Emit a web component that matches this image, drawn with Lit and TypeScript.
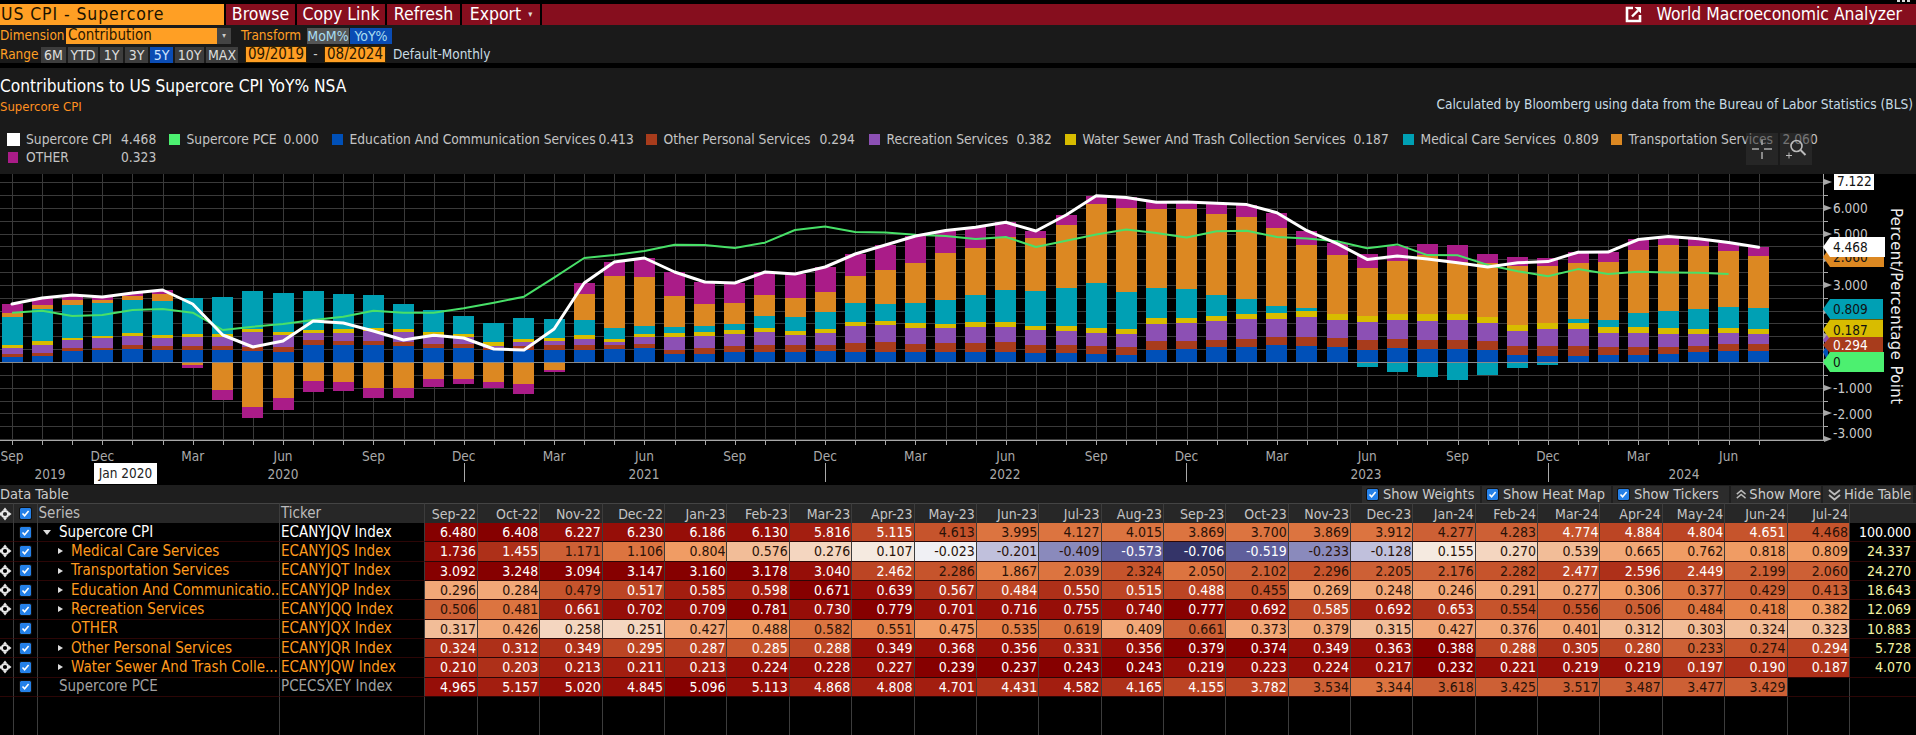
import { LitElement, html, css, svg } from "lit";
import { customElement } from "lit/decorators.js";

const MONTHS = ["Sep-22","Oct-22","Nov-22","Dec-22","Jan-23","Feb-23","Mar-23","Apr-23","May-23","Jun-23","Jul-23","Aug-23","Sep-23","Oct-23","Nov-23","Dec-23","Jan-24","Feb-24","Mar-24","Apr-24","May-24","Jun-24","Jul-24"];

interface Row { name: string; ticker: string; kind: "main"|"sub"|"plain"|"dim"; arrow: ""|"down"|"right"; move: boolean; weight: string; vals: string; heat: string; }

const ROWS: Row[] = [
 { name:"Supercore CPI", ticker:"ECANYJQV Index", kind:"main", arrow:"down", move:false, weight:"100.000", heat:"aabbbbceFHHHHHHHGGfeefF",
   vals:"6.480 6.408 6.227 6.230 6.186 6.130 5.816 5.115 4.613 3.995 4.127 4.015 3.869 3.700 3.869 3.912 4.277 4.283 4.774 4.884 4.804 4.651 4.468" },
 { name:"Medical Care Services", ticker:"ECANYJQS Index", kind:"sub", arrow:"right", move:true, weight:"24.337", heat:"bdGHJLMNOPQrsrQPNMLKJJJ",
   vals:"1.736 1.455 1.171 1.106 0.804 0.576 0.276 0.107 -0.023 -0.201 -0.409 -0.573 -0.706 -0.519 -0.233 -0.128 0.155 0.270 0.539 0.665 0.762 0.818 0.809" },
 { name:"Transportation Services", ticker:"ECANYJQT Index", kind:"sub", arrow:"right", move:true, weight:"24.270", heat:"aaaaaabeFIHFHGFGGFedeGG",
   vals:"3.092 3.248 3.094 3.147 3.160 3.178 3.040 2.462 2.286 1.867 2.039 2.324 2.050 2.102 2.296 2.205 2.176 2.282 2.477 2.596 2.449 2.199 2.060" },
 { name:"Education And Communicatio...", ticker:"ECANYJQP Index", kind:"sub", arrow:"right", move:true, weight:"18.643", heat:"KKFeccabdedeeFKKKKKJHGG",
   vals:"0.296 0.284 0.479 0.517 0.585 0.598 0.671 0.639 0.567 0.484 0.550 0.515 0.488 0.455 0.269 0.248 0.246 0.291 0.277 0.306 0.377 0.429 0.413" },
 { name:"Recreation Services", ticker:"ECANYJQQ Index", kind:"sub", arrow:"right", move:true, weight:"12.069", heat:"GHcbbababbbbabecdFFGHIJ",
   vals:"0.506 0.481 0.661 0.702 0.709 0.781 0.730 0.779 0.701 0.716 0.755 0.740 0.777 0.692 0.585 0.692 0.653 0.554 0.556 0.506 0.484 0.418 0.382" },
 { name:"OTHER", ticker:"ECANYJQX Index", kind:"sub", arrow:"", move:false, weight:"10.883", heat:"LKMMKJHIJIHKGKKLKKKLLLL",
   vals:"0.317 0.426 0.258 0.251 0.427 0.488 0.582 0.551 0.475 0.535 0.619 0.409 0.661 0.373 0.379 0.315 0.427 0.376 0.401 0.312 0.303 0.324 0.323" },
 { name:"Other Personal Services", ticker:"ECANYJQR Index", kind:"sub", arrow:"right", move:true, weight:"5.728", heat:"dddeefebbbcbaabbaedeGFe",
   vals:"0.324 0.312 0.349 0.295 0.287 0.285 0.288 0.349 0.368 0.356 0.331 0.356 0.379 0.374 0.349 0.363 0.388 0.288 0.305 0.280 0.233 0.274 0.294" },
 { name:"Water Sewer And Trash Colle...", ticker:"ECANYJQW Index", kind:"sub", arrow:"right", move:true, weight:"4.070", heat:"cdcccbbbaaaabbbbabbbddd",
   vals:"0.210 0.203 0.213 0.211 0.213 0.224 0.228 0.227 0.239 0.237 0.243 0.243 0.219 0.223 0.224 0.217 0.232 0.221 0.219 0.219 0.197 0.190 0.187" },
 { name:"Supercore PCE", ticker:"PCECSXEY Index", kind:"dim", arrow:"", move:false, weight:"", heat:"bcbbabcccdcdeeGHGGGGGG",
   vals:"4.965 5.157 5.020 4.845 5.096 5.113 4.868 4.808 4.701 4.431 4.582 4.165 4.155 3.782 3.534 3.344 3.618 3.425 3.517 3.487 3.477 3.429" },
];

const HEAT: Record<string,string> = {
  a:"#860000", b:"#960e08", c:"#a31e10", d:"#ae3019", e:"#bc4524", f:"#c6542c", g:"#cd6035", h:"#dc7440",
  i:"#e5824a", j:"#f09c64", k:"#f2a878", l:"#f2bd98", m:"#f4d6c0", n:"#f5eae0", o:"#f0f0f4",
  p:"#c0c0dc", q:"#8a8abc", r:"#5f5f9c", s:"#343468",
};

// Segment tops measured on the reference: blue, brown, purple, yellow, teal, orange, magenta
// (negative pair where the orange/magenta lie below zero). Units: zoomed y, zero = 576, 77 = 1pt.
const EARLY: number[][] = [
 [561,552,534,525,441,429,402],[558,549,525,513,417,405,384],[543,534,510,504,405,390,375],[540,534,504,498,399,390,381],
 [537,525,498,489,390,378,369],[540,528,504,495,393,372,360],
 [540,528,501,492,384,585,594],[540,528,501,492,381,660,690],[543,531,486,477,363,711,744],[546,531,495,486,369,684,720],
 [525,510,489,480,363,633,666],[525,513,489,477,372,636,663],[525,513,483,474,375,654,684],[528,516,486,477,402,654,684],
 [534,522,495,486,420,627,652],[534,522,501,492,438,627,642],[540,534,528,516,459,636,654],[540,528,516,507,444,642,672],
 [540,525,513,504,447,600,606],
 [540,525,507,495,450,372,339],[537,525,516,507,474,318,276],[534,522,501,492,468,321,264],[552,540,501,489,471,378,306],
 [552,534,498,486,468,402,336],[546,528,492,480,462,399,339],[546,525,486,474,438,375,306],[546,525,495,483,441,384,312],
 [543,525,489,477,426,366,291],[546,519,468,456,399,318,252],[546,516,465,453,402,300,225],[546,522,474,459,399,279,198],
 [546,519,474,462,390,249,182],[546,519,471,456,375,234,172],[546,516,471,456,360,201,157],[549,525,480,468,363,204,183],
 [549,525,483,468,354,165,135],
];
const EARLY_GREEN = [428,422,438,435,420,417,428,480,470,462,450,440,422,428,428,415,398,380,323,264,255,243,224,225,234,218,180,170,186,188,194,198,207,201,231,212];

const COLORS = ["#0050b8","#a83c1c","#8c50b4","#d8bc00","#00a0b4","#dc8822","#aa1c88"];
const PX = 25.67, ZERO = 188; // zero line in chart coordinates (chart starts at page y 174)
const tickX = (i: number) => 12 + 30.116 * i;
const yOf = (v: number) => ZERO - v * PX;

interface Bar { comps: number[]; total: number; pce: number|null; }
const num = (r: number) => ROWS[r].vals.split(" ").map(Number);
const BARS: Bar[] = (() => {
  const out: Bar[] = [];
  EARLY.forEach((t, i) => {
    const negMode = t[5] > 576;
    const comps = [ (576-t[0]), (t[0]-t[1]), (t[1]-t[2]), (t[2]-t[3]), (t[3]-t[4]),
      negMode ? -(t[5]-576) : (t[4]-t[5]), negMode ? -(t[6]-t[5]) : (t[5]-t[6]) ].map(v => v/77);
    out.push({ comps, total: comps.reduce((a,b)=>a+b,0), pce: (576-EARLY_GREEN[i])/77 });
  });
  const med=num(1), tr=num(2), edu=num(3), rec=num(4), oth=num(5), per=num(6), wat=num(7), tot=num(0), pce=num(8);
  for (let i=0;i<23;i++) {
    out.push({ comps:[edu[i],per[i],rec[i],wat[i],med[i],tr[i],oth[i]], total: tot[i], pce: i<pce.length ? pce[i] : null });
  }
  return out;
})();

const LEGEND = [
 { w:162, c:"#fff", big:true, t:"Supercore CPI", v:"4.468", lw:95 },
 { w:163, c:"#4cf070", t:"Supercore PCE", v:"0.000", lw:97 },
 { w:314, c:"#0050b8", t:"Education And Communication Services", v:"0.413", lw:249 },
 { w:223, c:"#a83c1c", t:"Other Personal Services", v:"0.294", lw:156 },
 { w:196, c:"#8c50b4", t:"Recreation Services", v:"0.382", lw:130 },
 { w:338, c:"#d8bc00", t:"Water Sewer And Trash Collection Services", v:"0.187", lw:271 },
 { w:208, c:"#00a0b4", t:"Medical Care Services", v:"0.809", lw:143 },
 { w:240, c:"#dc8822", t:"Transportation Services", v:"2.060", lw:154 },
];

const RANGE = [["6M",25],["YTD",30],["1Y",23],["3Y",23],["5Y",23,1],["10Y",29],["MAX",32]] as [string,number,number?][];
const MONTH_LABEL = ["Sep","Dec","Mar","Jun"];
const YEARS: [string,number][] = [["2019",50],["2020",283],["2021",644],["2022",1005],["2023",1366],["2024",1684]];
const YEAR_SEP = [464,825,1186,1548];

@customElement("app-root")
export class AppRoot extends LitElement {
  static styles = css`
    :host { display:block; width:1916px; height:735px; background:#000; overflow:hidden; position:relative;
      font-family:"DejaVu Sans Condensed","DejaVu Sans",sans-serif; font-stretch:condensed; font-size:13.5px; color:#ddd; line-height:1; }
    .dots { position:absolute; right:6px; top:0; width:13px; height:2px;
      background:repeating-linear-gradient(90deg,#ddd 0 3px,#000 3px 5px); }
    .topbar { display:flex; height:21px; margin-top:4px; gap:2px; font-size:17.5px; color:#fff; }
    .title-field { width:224px; background:#ff9f24; color:#1a1200; display:flex; align-items:center; padding-left:1px; box-sizing:border-box; letter-spacing:.9px; white-space:nowrap; }
    .tb { background:#860e1e; display:flex; align-items:center; justify-content:center; white-space:nowrap; }
    .tb-fill { flex:1; background:#860e1e; display:flex; align-items:center; justify-content:flex-end; padding-right:14px; gap:14px; font-size:17.4px; }
    .caret { font-size:9px; margin-left:7px; color:#ddd; }
    .panel { background:#1a1a1a; height:38px; padding-top:2px; box-sizing:border-box; display:flex; flex-direction:column; gap:2px; color:#ff9f24; }
    .prow { display:flex; align-items:center; height:17px; white-space:nowrap; }
    .field { background:#ff9f24; color:#2a1800; height:16px; display:flex; align-items:center; box-sizing:border-box; padding-left:2px; font-size:15px; }
    .dd { width:14px; height:16px; background:#444; color:#ccc; font-size:8px; display:flex; align-items:center; justify-content:center; }
    .btn { height:16px; background:#3d3d3d; color:#ddd; display:flex; align-items:center; justify-content:center; font-size:14px; }
    .btn.on { background:#0a4cb4; color:#cfe4ff; }
    .btn.light { background:#555; color:#a8dcf0; }
    .btn.blue { background:#0a4cb4; color:#a8dcf0; }
    .range { display:flex; gap:2px; }
    .date { width:62px; height:17px; background:#ff9f24; color:#2a1800; display:flex; align-items:center; justify-content:center; font-size:15px;
      border:1px solid #332200; box-sizing:border-box; }
    .band { height:5px; background:#000; }
    .head { height:106px; background:#1a1a1a; position:relative; }
    .head-top { padding-top:10px; height:50px; box-sizing:border-box; }
    .h-title { font-size:17.2px; color:#fff; white-space:nowrap; }
    .h-sub-row { display:flex; justify-content:space-between; align-items:center; padding-right:3px; margin-top:4px; }
    .h-sub { color:#ff9020; font-size:13px; }
    .h-calc { color:#c8dce4; font-size:13.6px; position:relative; top:-1px; }
    .legend { display:flex; flex-wrap:wrap; padding:15px 0 0 7px; row-gap:5px; font-size:13.7px; }
    .li { display:flex; align-items:center; height:13px; color:#c4c4c4; white-space:nowrap; }
    .sw { width:11px; height:11px; margin-right:6.5px; flex:none; }
    .sw.big { width:13px; height:13px; margin-right:6px; }
    .sw.small { width:10px; height:11px; margin-left:1px; margin-right:8px; }
    .lname { flex:none; }
    .hud { position:absolute; left:1746px; top:65px; display:flex; gap:2px; }
    .hud div { width:32px; height:32px; background:rgba(50,50,50,.55); }
    .hud svg { display:block; }
    .chart { display:block; }
    .ax { font-size:13.5px; fill:#c8c8c8; font-family:"DejaVu Sans Condensed","DejaVu Sans",sans-serif; font-stretch:condensed; }
    .xl { font-size:13.5px; fill:#aaa; text-anchor:middle; font-family:"DejaVu Sans Condensed","DejaVu Sans",sans-serif; font-stretch:condensed; }
    .tagt { font-size:13.5px; fill:#111; font-family:"DejaVu Sans Condensed","DejaVu Sans",sans-serif; font-stretch:condensed; }
    .tagw { fill:#fff; }
    .axis-title { fill:#eee; font-size:16.5px; letter-spacing:.45px; }
    .tip { fill:#222; }
    .dt-bar { height:18px; margin-top:1px; background:#1e1e1e; display:flex; align-items:center; justify-content:space-between; font-size:14.5px; color:#ccc; padding-right:3px; }
    .dt-btns { display:flex; gap:2px; height:17px; }
    .dt-btn { background:#2c2c2c; display:flex; align-items:center; gap:5px; padding-left:5px; box-sizing:border-box; color:#ccc; white-space:nowrap; }
    .dt-btn.tight { gap:3px; }
    .grid { display:grid; grid-template-columns:14px 23.5px 242.5px 145px 53px repeat(22,62.36px) 1fr; grid-template-rows:20px repeat(9,19.33px) 1fr; height:232px; }
    .row { display:contents; }
    .c { border-right:1px solid #3c3c3c; box-sizing:border-box; display:flex; align-items:center; overflow:hidden; white-space:nowrap; font-size:14px; border-bottom:1px solid #2c0606; }
    .hdr .c { background:#272727; border-bottom:0; border-top:1px solid #444; color:#bbb; font-size:14px; }
    .hdr .c.lbl { font-size:15px; }
    .hdr .num { color:#c4c4c4; }
    .num { justify-content:flex-end; padding-right:1px; color:#fff; }
    .num.dark { color:#2a1208; }
    .txt { font-size:15px; }
    .main { color:#fff; } .sub { color:#ff9a1e; } .dim { color:#a0a0a0; }
    .pad { padding-left:1px; }
    .tri { display:inline-block; width:0; height:0; flex:none; }
    .tri.down { border:4px solid transparent; border-top:5px solid #ddd; border-bottom:0; margin:0 8px 0 5.5px; }
    .tri.right { border:3px solid transparent; border-left:5px solid #ddd; border-right:0; margin:0 8px 0 20.5px; }
    .tri.none { width:33.5px; } .tri.none2 { width:21.5px; }
    .ck { width:11px; height:11px; background:#2480e8; border-radius:1px; display:flex; align-items:center; justify-content:center; flex:none; outline:1px solid #111; }
    .ctr { justify-content:center; }
    .mv { margin-left:-1px; }
    .wt { justify-content:flex-end; color:#f4f4a4; border-right:0; padding-right:5px; }
    .wt.first { color:#fff; }
    .end { border-bottom:0; }
    .hdr .end, .noline { border-right:0; }
  `;

  private check() {
    return html`<span class="ck"><svg width="9" height="9" viewBox="0 0 9 9"><path d="M1.5 4.5 L3.6 6.8 L7.6 2" fill="none" stroke="#fff" stroke-width="1.6"/></svg></span>`;
  }
  private move() {
    return html`<svg class="mv" width="14" height="14" viewBox="0 0 14 14"><circle cx="6" cy="7" r="3.1" fill="none" stroke="#e8e8e8" stroke-width="2"/><path d="M6 0.5 8 3 4 3Z M6 13.5 8 11 4 11Z M-0.5 7 2 5 2 9Z M12.5 7 10 5 10 9Z" fill="#e8e8e8"/></svg>`;
  }
  private chevrons(up: boolean) {
    const d = up ? "M1 6 6.5 1.5 12 6M1 11 6.5 6.5 12 11" : "M1 2 6.5 6.5 12 2M1 7 6.5 11.5 12 7";
    return html`<svg width="13" height="13" viewBox="0 0 13 13"><path d=${d} fill="none" stroke="#bbb" stroke-width="1.8"/></svg>`;
  }

  private renderChart() {
    const W = 1916, H = 310;
    const gridH: number[] = [];
    for (let k=14;k>=-6;k--) gridH.push(k/2);
    const bars = BARS.map((b,i)=>{
      let up = 0, dn = 0;
      const x = Math.round(tickX(i) - 10.5);
      return b.comps.map((v,ci)=>{
        if (Math.abs(v) < 0.001) return null;
        let y0, y1;
        if (v >= 0) { y0 = up; y1 = up + v; up = y1; } else { y0 = dn; y1 = dn + v; dn = y1; }
        const top = yOf(Math.max(y0,y1)), bot = yOf(Math.min(y0,y1));
        return svg`<rect x=${x} y=${top} width="21" height=${bot-top} fill=${COLORS[ci]}/>`;
      });
    });
    const white = BARS.map((b,i)=>`${tickX(i).toFixed(1)},${yOf(b.total).toFixed(1)}`).join(" ");
    const green = BARS.filter(b=>b.pce!==null).map((b,i)=>`${tickX(i).toFixed(1)},${yOf(b.pce as number).toFixed(1)}`).join(" ");
    const tag = (cy:number,c:string,t:string,x2=1884,h=10,cls="tagt")=>svg`
      <polygon points="1823,${cy} 1830,${cy-h} ${x2},${cy-h} ${x2},${cy+h} 1830,${cy+h}" fill=${c}/>
      <text class=${cls} x="1833" y=${cy+5}>${t}</text>`;
    const AY = 266; // x axis y within chart (page 440)
    return html`<svg class="chart" width=${W} height=${H} viewBox="0 0 ${W} ${H}">
      <g stroke="#3a3a3a" stroke-width="1" shape-rendering="crispEdges">
        ${gridH.map(v=>svg`<line x1="0" x2="1823" y1=${Math.round(yOf(v))+.5} y2=${Math.round(yOf(v))+.5}/>`)}
        ${BARS.map((_,i)=>svg`<line x1=${Math.round(tickX(i))+.5} x2=${Math.round(tickX(i))+.5} y1="0" y2=${AY}/>`)}
      </g>
      <g shape-rendering="crispEdges">${bars}</g>
      <line x1="0" x2="1823" y1=${ZERO+.5} y2=${ZERO+.5} stroke="#8a8a8a" shape-rendering="crispEdges"/>
      <polyline points=${green} fill="none" stroke="#48e068" stroke-width="2" stroke-linejoin="round"/>
      <polyline points=${white} fill="none" stroke="#fff" stroke-width="3" stroke-linejoin="round" stroke-linecap="round"/>
      <g stroke="#a8a8a8" shape-rendering="crispEdges">
        <line x1="0" x2="1824" y1=${AY+.5} y2=${AY+.5}/>
        <line x1="1823.5" x2="1823.5" y1="0" y2=${AY}/>
        ${BARS.map((_,i)=>svg`<line x1=${Math.round(tickX(i))+.5} x2=${Math.round(tickX(i))+.5} y1=${AY} y2=${AY+5}/>`)}
      </g>
      ${gridH.map(v=> Number.isInteger(v)
        ? svg`<path d="M1824 ${Math.round(yOf(v))-3} l8 3 l-8 3z" fill="#a8a8a8"/>`
        : svg`<line x1="1824" x2="1828" y1=${Math.round(yOf(v))+.5} y2=${Math.round(yOf(v))+.5} stroke="#a8a8a8" shape-rendering="crispEdges"/>`)}
      ${BARS.map((_,i)=> i%3===0 ? svg`<text class="xl" x=${tickX(i)} y=${AY+21}>${MONTH_LABEL[(i/3)%4]}</text>` : null)}
      ${YEARS.map(([t,x])=>svg`<text class="xl" x=${x} y=${AY+39}>${t}</text>`)}
      ${YEAR_SEP.map(x=>svg`<line x1=${x+.5} x2=${x+.5} y1="289" y2="308" stroke="#aaa" shape-rendering="crispEdges"/>`)}
      ${[[6,34],[5,59.7],[3,111],[-1,214],[-2,240],[-3,259]].map(([v,y])=>svg`<text class="ax" x="1833" y=${y+5}>${(v as number).toFixed(3)}</text>`)}
      <rect x="1834" y="-1" width="40" height="17" fill="#fff"/><text class="tagt" x="1837" y="12">7.122</text>
      <polygon points="1823,178 1828,168 1828,188" fill="#0050b8"/>
      ${tag(83,"#dc8822","2.060")}
      ${tag(73,"#fff","4.468",1885)}
      ${tag(135,"#00a0b4","0.809",1883)}
      ${tag(166,"#8c50b4","0.382",1883,9)}
      ${tag(155.5,"#d8bc00","0.187",1883)}
      ${tag(171,"#a83c1c","0.294",1883,8,"tagt tagw")}
      ${tag(188,"#4cf070","0",1884)}
      <text class="ax axis-title" x="0" y="0" transform="translate(1891,34) rotate(90)">Percent/Percentage Point</text>
      <rect x="94" y="289" width="63" height="21" fill="#fff"/>
      <text class="xl tip" x="125.5" y="304">Jan 2020</text>
    </svg>`;
  }

  render() {
    return html`
      <div class="dots"></div>
      <div class="topbar">
        <div class="title-field">US CPI - Supercore</div>
        <div class="tb" style="width:69px">Browse</div>
        <div class="tb" style="width:88px">Copy Link</div>
        <div class="tb" style="width:73px">Refresh</div>
        <div class="tb" style="width:78px">Export<span class="caret">▾</span></div>
        <div class="tb-fill">
          <svg width="17" height="17" viewBox="0 0 17 17"><path d="M8 2H2v13h13V9" fill="none" stroke="#fff" stroke-width="2.6"/><path d="M7 10.5 13 4.5" stroke="#fff" stroke-width="2.4"/><path d="M9.5 1h6.5v6.5z" fill="#fff"/></svg>
          <span>World Macroeconomic Analyzer</span>
        </div>
      </div>
      <div class="panel">
        <div class="prow">
          <span style="width:66px">Dimension</span>
          <div class="field" style="width:151px">Contribution</div>
          <div class="dd">▾</div>
          <span style="margin-left:10px;width:66px">Transform</span>
          <div class="btn light" style="width:42px">MoM%</div>
          <div class="btn blue" style="width:42px;margin-left:1px">YoY%</div>
        </div>
        <div class="prow">
          <span style="width:41px">Range</span>
          <div class="range">${RANGE.map(([t,w,on])=>html`<div class="btn ${on?"on":""}" style="width:${w}px">${t}</div>`)}</div>
          <div class="date" style="margin-left:7px">09/2019</div>
          <span style="width:17px;text-align:center;color:#ccc">-</span>
          <div class="date">08/2024</div>
          <span style="margin-left:7px;color:#c8dce4">Default-Monthly</span>
        </div>
      </div>
      <div class="band"></div>
      <div class="head">
        <div class="head-top">
          <div class="h-title">Contributions to US Supercore CPI YoY% NSA</div>
          <div class="h-sub-row"><span class="h-sub">Supercore CPI</span><span class="h-calc">Calculated by Bloomberg using data from the Bureau of Labor Statistics (BLS)</span></div>
        </div>
        <div class="legend">
          ${LEGEND.map(l=>html`<div class="li" style="width:${l.w}px"><span class="sw ${l.big?"big":""}" style="background:${l.c}"></span><span class="lname" style="width:${l.lw}px">${l.t}</span><span>${l.v}</span></div>`)}
          <div class="li" style="width:160px"><span class="sw small" style="background:#aa1c88"></span><span class="lname" style="width:95px">OTHER</span><span>0.323</span></div>
        </div>
        <div class="hud">
          <div><svg width="32" height="32" viewBox="0 0 32 32" fill="none" stroke="#aaa" stroke-width="1.5"><path d="M16 7v5M16 19v7M6 16h7M18 16h8"/></svg></div>
          <div><svg width="32" height="32" viewBox="0 0 32 32" fill="none" stroke="#bbb" stroke-width="1.6"><circle cx="16.5" cy="13" r="5.5"/><path d="M20.5 17l5 5" stroke-width="2"/><path d="M6 22.5h6M9 19.5v6" stroke-width="1"/></svg></div>
        </div>
      </div>
      ${this.renderChart()}
      <div class="dt-bar">
        <span>Data Table</span>
        <div class="dt-btns">
          <div class="dt-btn" style="width:118px">${this.check()}Show Weights</div>
          <div class="dt-btn" style="width:129px">${this.check()}Show Heat Map</div>
          <div class="dt-btn" style="width:116px">${this.check()}Show Tickers</div>
          <div class="dt-btn tight" style="width:90px">${this.chevrons(true)}Show More</div>
          <div class="dt-btn tight" style="width:90px">${this.chevrons(false)}Hide Table</div>
        </div>
      </div>
      <div class="grid">
        <div class="row hdr">
          <div class="c ctr">${this.move()}</div>
          <div class="c ctr">${this.check()}</div>
          <div class="c lbl"><span class="pad">Series</span></div>
          <div class="c lbl"><span class="pad">Ticker</span></div>
          ${MONTHS.map(m=>html`<div class="c num">${m}</div>`)}
          <div class="c end"></div>
        </div>
        ${ROWS.map((r,ri)=>{
          const vals = r.vals.split(" ");
          return html`<div class="row">
            <div class="c ctr">${r.move?this.move():""}</div>
            <div class="c ctr">${this.check()}</div>
            <div class="c txt ${r.kind}">
              ${r.arrow==="down"?html`<span class="tri down"></span>`:r.arrow==="right"?html`<span class="tri right"></span>`:html`<span class="tri ${r.kind==="dim"?"none2":"none"}"></span>`}
              <span>${r.name}</span>
            </div>
            <div class="c txt ${r.kind}"><span class="pad">${r.ticker}</span></div>
            ${MONTHS.map((_,i)=>{
              const v = vals[i]; if (v===undefined) return html`<div class="c"></div>`;
              const code = r.heat[i];
              const dark = code === code.toUpperCase();
              return html`<div class="c num ${dark?"dark":""}" style="background:${HEAT[code.toLowerCase()]}">${v}</div>`;
            })}
            <div class="c wt ${ri===0?"first":""}">${r.weight}</div>
          </div>`;
        })}
        <div class="row">
          ${Array.from({length:27}).map(()=>html`<div class="c end"></div>`)}
          <div class="c end noline"></div>
        </div>
      </div>
    `;
  }
}
